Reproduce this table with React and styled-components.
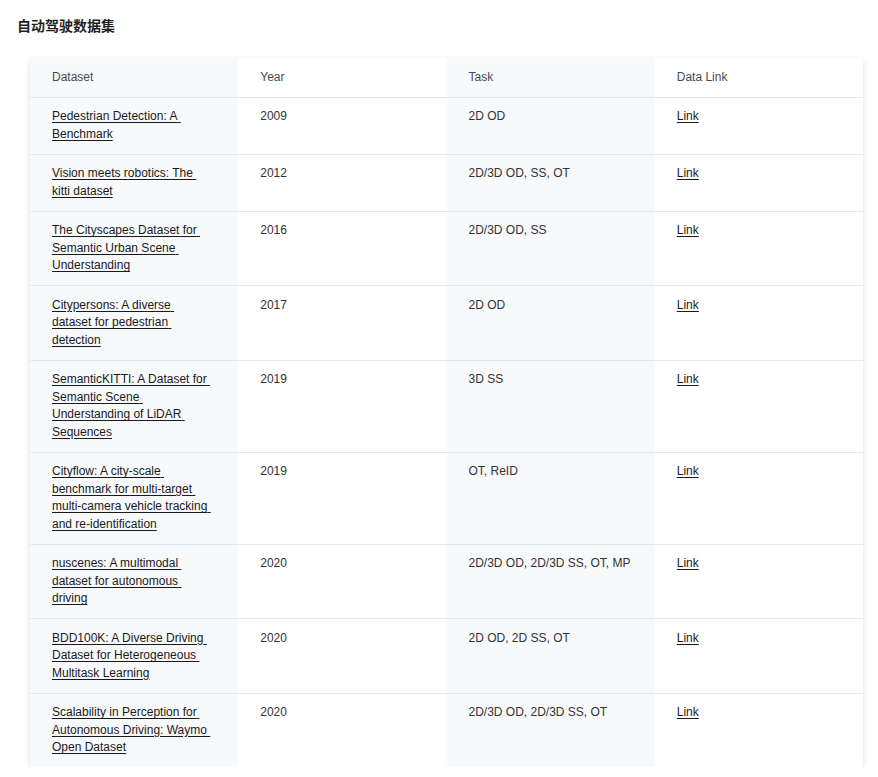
import React from "react";
import styled, { createGlobalStyle } from "styled-components";

const Global = createGlobalStyle`
  html, body { margin: 0; padding: 0; background: #ffffff; }
  body { font-family: "Liberation Sans", Arial, "Noto Sans CJK SC", sans-serif; }
`;

const Page = styled.div`
  padding: 16px 15px 0 17px;
`;

const Title = styled.h3`
  margin: 0 0 22px 0;
  font-size: 14px;
  line-height: 20px;
  font-weight: 700;
  color: #1f1f1f;
  font-family: "Liberation Sans", "Noto Sans CJK SC", sans-serif;
`;

const Card = styled.div`
  margin-left: 13px;
  width: 833px;
  border-radius: 4px;
  box-shadow: 0 2px 6px rgba(0, 0, 0, 0.12);
  overflow: hidden;
  background: #fff;
`;

const Table = styled.table`
  width: 100%;
  border-collapse: collapse;
  table-layout: fixed;
  font-size: 12px;
  line-height: 17.5px;
`;

const Cell = styled.td`
  padding: 10.5px ${(p) => (p.$narrow ? "27px" : "12px")} 10.5px 22px;
  vertical-align: top;
  text-align: left;
  color: #333;
  font-weight: 400;
  border-bottom: ${(p) => (p.$last ? "none" : "1px solid #e6e7ea")};
  background: ${(p) => (p.$shade ? "#f8f9fb" : "#ffffff")};
  word-wrap: break-word;
`;

const HeadCell = styled(Cell).attrs({ as: "th" })`
  color: #474a50;
`;

const A = styled.a`
  color: #1a1a1a;
  text-decoration: underline;
  text-underline-offset: 2px;
  white-space: pre-wrap;
`;

const rows = [
  ["Pedestrian Detection: A Benchmark", "2009", "2D OD"],
  ["Vision meets robotics: The kitti dataset", "2012", "2D/3D OD, SS, OT"],
  ["The Cityscapes Dataset for Semantic Urban Scene Understanding", "2016", "2D/3D OD, SS"],
  ["Citypersons: A diverse dataset for pedestrian detection", "2017", "2D OD"],
  ["SemanticKITTI: A Dataset for Semantic Scene Understanding of LiDAR Sequences", "2019", "3D SS"],
  ["Cityflow: A city-scale benchmark for multi-target multi-camera vehicle tracking and re-identification", "2019", "OT, ReID"],
  ["nuscenes: A multimodal dataset for autonomous driving", "2020", "2D/3D OD, 2D/3D SS, OT, MP"],
  ["BDD100K: A Diverse Driving Dataset for Heterogeneous Multitask Learning", "2020", "2D OD, 2D SS, OT"],
  ["Scalability in Perception for Autonomous Driving: Waymo Open Dataset", "2020", "2D/3D OD, 2D/3D SS, OT"],
];

export default function App() {
  return (
    <Page>
      <Global />
      <Title>自动驾驶数据集</Title>
      <Card>
        <Table>
          <thead>
            <tr>
              <HeadCell $shade $narrow>Dataset</HeadCell>
              <HeadCell>Year</HeadCell>
              <HeadCell $shade>Task</HeadCell>
              <HeadCell>Data Link</HeadCell>
            </tr>
          </thead>
          <tbody>
            {rows.map((r, i) => {
              const last = i === rows.length - 1;
              return (
                <tr key={i}>
                  <Cell $shade $narrow $last={last}>
                    <A href="#">{r[0]}</A>
                  </Cell>
                  <Cell $last={last}>{r[1]}</Cell>
                  <Cell $shade $last={last}>{r[2]}</Cell>
                  <Cell $last={last}>
                    <A href="#">Link</A>
                  </Cell>
                </tr>
              );
            })}
          </tbody>
        </Table>
      </Card>
    </Page>
  );
}
